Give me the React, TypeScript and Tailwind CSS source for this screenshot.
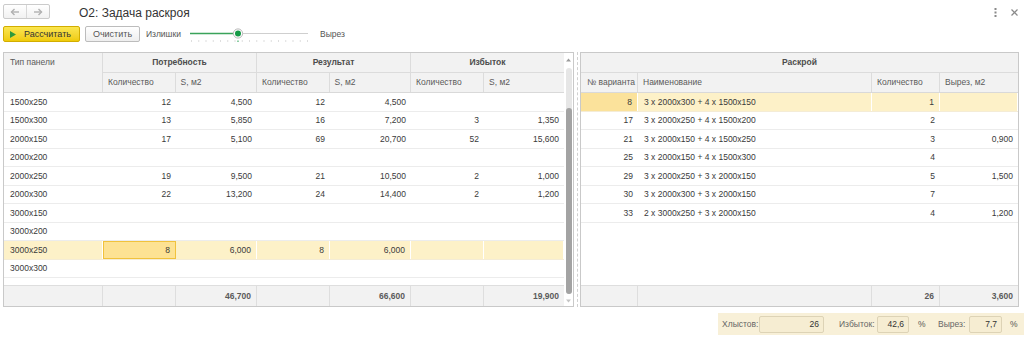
import React from "react";

const LW = ["w-[99px]", "w-[73px]", "w-[81px]", "w-[73px]", "w-[81px]", "w-[73px]", "w-[80px]"];
const RW = ["w-[57px]", "w-[234px]", "w-[68px]", "w-[78px]"];

const leftRows: string[][] = [
  ["1500x250", "12", "4,500", "12", "4,500", "", ""],
  ["1500x300", "13", "5,850", "16", "7,200", "3", "1,350"],
  ["2000x150", "17", "5,100", "69", "20,700", "52", "15,600"],
  ["2000x200", "", "", "", "", "", ""],
  ["2000x250", "19", "9,500", "21", "10,500", "2", "1,000"],
  ["2000x300", "22", "13,200", "24", "14,400", "2", "1,200"],
  ["3000x150", "", "", "", "", "", ""],
  ["3000x200", "", "", "", "", "", ""],
  ["3000x250", "8", "6,000", "8", "6,000", "", ""],
  ["3000x300", "", "", "", "", "", ""],
];

const rightRows: string[][] = [
  ["8", "3 x 2000x300 + 4 x 1500x150", "1", ""],
  ["17", "3 x 2000x250 + 4 x 1500x200", "2", ""],
  ["21", "3 x 2000x150 + 4 x 1500x250", "3", "0,900"],
  ["25", "3 x 2000x150 + 4 x 1500x300", "4", ""],
  ["29", "3 x 2000x250 + 3 x 2000x150", "5", "1,500"],
  ["30", "3 x 2000x300 + 3 x 2000x150", "7", ""],
  ["33", "2 x 3000x250 + 3 x 2000x150", "4", "1,200"],
];

function Arrow({ dir }: { dir: "l" | "r" }) {
  return (
    <svg width="10" height="8" viewBox="0 0 10 8">
      {dir === "l" ? (
        <g stroke="#b0b0b0" strokeWidth="1.4" fill="none">
          <line x1="1.5" y1="4" x2="9" y2="4" />
          <polyline points="4.5,1 1.5,4 4.5,7" />
        </g>
      ) : (
        <g stroke="#b0b0b0" strokeWidth="1.4" fill="none">
          <line x1="1" y1="4" x2="8.5" y2="4" />
          <polyline points="5.5,1 8.5,4 5.5,7" />
        </g>
      )}
    </svg>
  );
}

function Slider() {
  const dots = [];
  for (let i = 0; i < 17; i++) {
    const x = 4 + i * 7.25;
    dots.push(<rect key={i} x={x} y={15.5} width="1" height="1" fill="#bdbdbd" />);
  }
  return (
    <svg width="126" height="18" viewBox="0 0 126 18" className="overflow-visible">
      {dots}
      <rect x="50.5" y="15.5" width="1" height="1.5" fill="#1f9d4d" />
      <line x1="3" y1="8.5" x2="121" y2="8.5" stroke="#cfcfcf" strokeWidth="1" />
      <line x1="3" y1="8.5" x2="51" y2="8.5" stroke="#3aa35a" strokeWidth="1.6" />
      <circle cx="51" cy="8.5" r="4.6" fill="#ffffff" stroke="#b8b8b8" strokeWidth="1" />
      <circle cx="51" cy="8.5" r="3" fill="#159a46" />
    </svg>
  );
}

function LeftTable() {
  return (
    <div className="flex w-[571px] h-[255px] border border-[#c9c9c9]">
      <div className="flex flex-col w-[560px]">
        <div className="flex h-[40px] bg-[#f2f2f2] border-b border-[#d9d9d9] text-[#5a5a5a]">
          <div className="w-[99px] border-r border-[#dcdcdc] pl-[6px] pt-[5px]">Тип панели</div>
          {[
            ["Потребность", "w-[154px]", "w-[81px]"],
            ["Результат", "w-[154px]", "w-[81px]"],
            ["Избыток", "w-[153px]", "w-[80px]"],
          ].map(([t, w, sw], gi) => (
            <div key={t} className={`${w} flex flex-col ${gi < 2 ? "border-r border-[#dcdcdc]" : ""}`}>
              <div className="h-[20px] flex items-center justify-center font-bold text-[#4d4d4d] border-b border-[#dcdcdc]">
                {t}
              </div>
              <div className="flex flex-1">
                <div className="w-[73px] border-r border-[#dcdcdc] pl-[5px] flex items-center">Количество</div>
                <div className={`${sw} pl-[5px] flex items-center`}>S, м2</div>
              </div>
            </div>
          ))}
        </div>
        {leftRows.map((r, ri) => {
          const hl = ri === 8;
          return (
            <div
              key={ri}
              className={`flex h-[18.5px] border-b ${hl ? "bg-[#fdf1c8] border-[#f4ecd6]" : "border-[#ececec]"} text-[#3a3a3a]`}
            >
              {r.map((c, ci) => {
                let cls = `${LW[ci]} flex items-center `;
                cls += ci === 0 ? "pl-[6px] " : "justify-end pr-[5px] ";
                if (hl) {
                  if (ci === 1) cls += "bg-[#fde293] border border-[#f1c23c] ";
                  else cls += "border-r border-white ";
                }
                return (
                  <div key={ci} className={cls}>
                    {c}
                  </div>
                );
              })}
            </div>
          );
        })}
        <div className="flex-1" />
        <div className="flex h-[21px] bg-[#f2f2f2] border-t border-[#dedede] font-bold text-[#5a5a5a]">
          {["", "", "46,700", "", "66,600", "", "19,900"].map((c, ci) => (
            <div
              key={ci}
              className={`${LW[ci]} flex items-center justify-end pr-[5px] ${ci < 6 ? "border-r border-[#dedede]" : ""}`}
            >
              {c}
            </div>
          ))}
        </div>
      </div>
      <div className="w-[9px] flex flex-col items-center bg-white">
        <svg width="5" height="4" viewBox="0 0 5 4" className="mt-[5px]">
          <polygon points="2.5,0.5 5,3.5 0,3.5" fill="#9a9a9a" />
        </svg>
        <div className="mt-[6px] w-[6px] h-[226px] bg-[#e6e6e6] rounded-[3px] flex flex-col">
          <div className="h-[40px]" />
          <div className="flex-1 bg-[#a3a3a3] rounded-[3px]" />
        </div>
        <svg width="5" height="4" viewBox="0 0 5 4" className="mt-[5px]">
          <polygon points="0,0.5 5,0.5 2.5,3.5" fill="#c4c4c4" />
        </svg>
      </div>
    </div>
  );
}

function RightTable() {
  return (
    <div className="flex flex-col w-[439px] h-[255px] border border-[#c9c9c9]">
      <div className="flex flex-col h-[40px] bg-[#f2f2f2] border-b border-[#d9d9d9] text-[#5a5a5a]">
        <div className="h-[20px] flex items-center justify-center font-bold text-[#4d4d4d] border-b border-[#dcdcdc]">
          Раскрой
        </div>
        <div className="flex flex-1">
          {["№ варианта", "Наименование", "Количество", "Вырез, м2"].map((t, i) => (
            <div
              key={t}
              className={`${RW[i]} flex items-center ${i === 0 ? "pl-[6px]" : "pl-[5px]"} ${i < 3 ? "border-r border-[#dcdcdc]" : ""}`}
            >
              {t}
            </div>
          ))}
        </div>
      </div>
      {rightRows.map((r, ri) => {
        const hl = ri === 0;
        return (
          <div
            key={ri}
            className={`flex h-[18.5px] border-b ${hl ? "bg-[#fdf1c8] border-[#f4ecd6]" : "border-[#ececec]"} text-[#3a3a3a]`}
          >
            {r.map((c, ci) => {
              let cls = `${RW[ci]} flex items-center `;
              cls += ci === 1 ? "pl-[6px] " : "justify-end pr-[5px] ";
              if (hl) {
                if (ci === 0) cls += "bg-[#fbe29b] ";
                cls += "border-r border-white ";
              }
              return (
                <div key={ci} className={cls}>
                  {c}
                </div>
              );
            })}
          </div>
        );
      })}
      <div className="flex-1" />
      <div className="flex h-[21px] bg-[#f2f2f2] border-t border-[#dedede] font-bold text-[#5a5a5a]">
        {["", "", "26", "3,600"].map((c, ci) => (
          <div
            key={ci}
            className={`${RW[ci]} flex items-center justify-end pr-[5px] ${ci < 3 ? "border-r border-[#dedede]" : ""}`}
          >
            {c}
          </div>
        ))}
      </div>
    </div>
  );
}

export default function App() {
  return (
    <div className="w-[1024px] h-[341px] bg-white overflow-hidden font-['Liberation_Sans',Arial,sans-serif] text-[8.5px] leading-none text-[#444]">
      <div className="flex items-center h-[15px] mt-[4px]">
        <div className="ml-[3px] w-[47px] h-[15px] flex border border-[#cbcbcb] rounded-[2px] bg-gradient-to-b from-white to-[#f1f1f1]">
          <div className="w-[23px] flex items-center justify-center border-r border-[#d8d8d8]">
            <Arrow dir="l" />
          </div>
          <div className="flex-1 flex items-center justify-center">
            <Arrow dir="r" />
          </div>
        </div>
        <div className="ml-[29px] pt-[2px] text-[12px] text-[#333]">О2: Задача раскроя</div>
        <div className="flex-1" />
        <svg width="3" height="9" viewBox="0 0 3 9" className="mr-[14px] mt-[1px]">
          <rect x="0.5" y="0" width="2" height="2" fill="#8a8a8a" />
          <rect x="0.5" y="3.5" width="2" height="2" fill="#8a8a8a" />
          <rect x="0.5" y="7" width="2" height="2" fill="#8a8a8a" />
        </svg>
        <svg width="7" height="7" viewBox="0 0 7 7" className="mr-[6px] mt-[1px]">
          <g stroke="#8a8a8a" strokeWidth="1.2">
            <line x1="0.5" y1="0.5" x2="6.5" y2="6.5" />
            <line x1="6.5" y1="0.5" x2="0.5" y2="6.5" />
          </g>
        </svg>
      </div>
      <div className="flex items-center h-[16px] mt-[7px]">
        <div className="ml-[3px] w-[77px] h-[16px] flex items-center border border-[#d2ad00] rounded-[2px] bg-gradient-to-b from-[#fbe64e] to-[#efcb05] text-[9px] text-[#333]">
          <svg width="6" height="7" viewBox="0 0 6 7" className="ml-[6px]">
            <polygon points="0,0 6,3.5 0,7" fill="#2f9a3c" />
          </svg>
          <span className="ml-[8px]">Рассчитать</span>
        </div>
        <div className="ml-[5px] w-[55px] h-[16px] flex items-center justify-center border border-[#bcbcbc] rounded-[2px] bg-gradient-to-b from-white to-[#eeeeee] text-[9px] text-[#555]">
          Очистить
        </div>
        <div className="ml-[6px] w-[41px] text-[#555]">Излишки</div>
        <Slider />
        <div className="ml-[7px] text-[#555]">Вырез</div>
      </div>
      <div className="flex mt-[10px] ml-[3px]">
        <LeftTable />
        <div className="w-[6px] flex justify-center">
          <div className="h-full border-l border-dashed border-[#d0d0d0]" />
        </div>
        <RightTable />
      </div>
      <div className="flex mt-[6px]">
        <div className="ml-auto w-[306px] h-[22px] bg-[#f8f0d8] flex items-center pl-[4px] text-[#666]">
          <div className="w-[37px]">Хлыстов:</div>
          <div className="w-[65px] h-[17px] bg-[#f6edd2] border border-[#ddd3b6] rounded-[2px] flex items-center justify-end pr-[4px] text-[#333]">
            26
          </div>
          <div className="ml-[15px] w-[38px]">Избыток:</div>
          <div className="w-[32px] h-[17px] bg-[#f6edd2] border border-[#ddd3b6] rounded-[2px] flex items-center justify-end pr-[4px] text-[#333]">
            42,6
          </div>
          <div className="ml-[9px] w-[20px] text-[#555]">%</div>
          <div className="w-[31px]">Вырез:</div>
          <div className="w-[33px] h-[17px] bg-[#f6edd2] border border-[#ddd3b6] rounded-[2px] flex items-center justify-end pr-[4px] text-[#333]">
            7,7
          </div>
          <div className="ml-[8px] text-[#555]">%</div>
        </div>
      </div>
    </div>
  );
}
